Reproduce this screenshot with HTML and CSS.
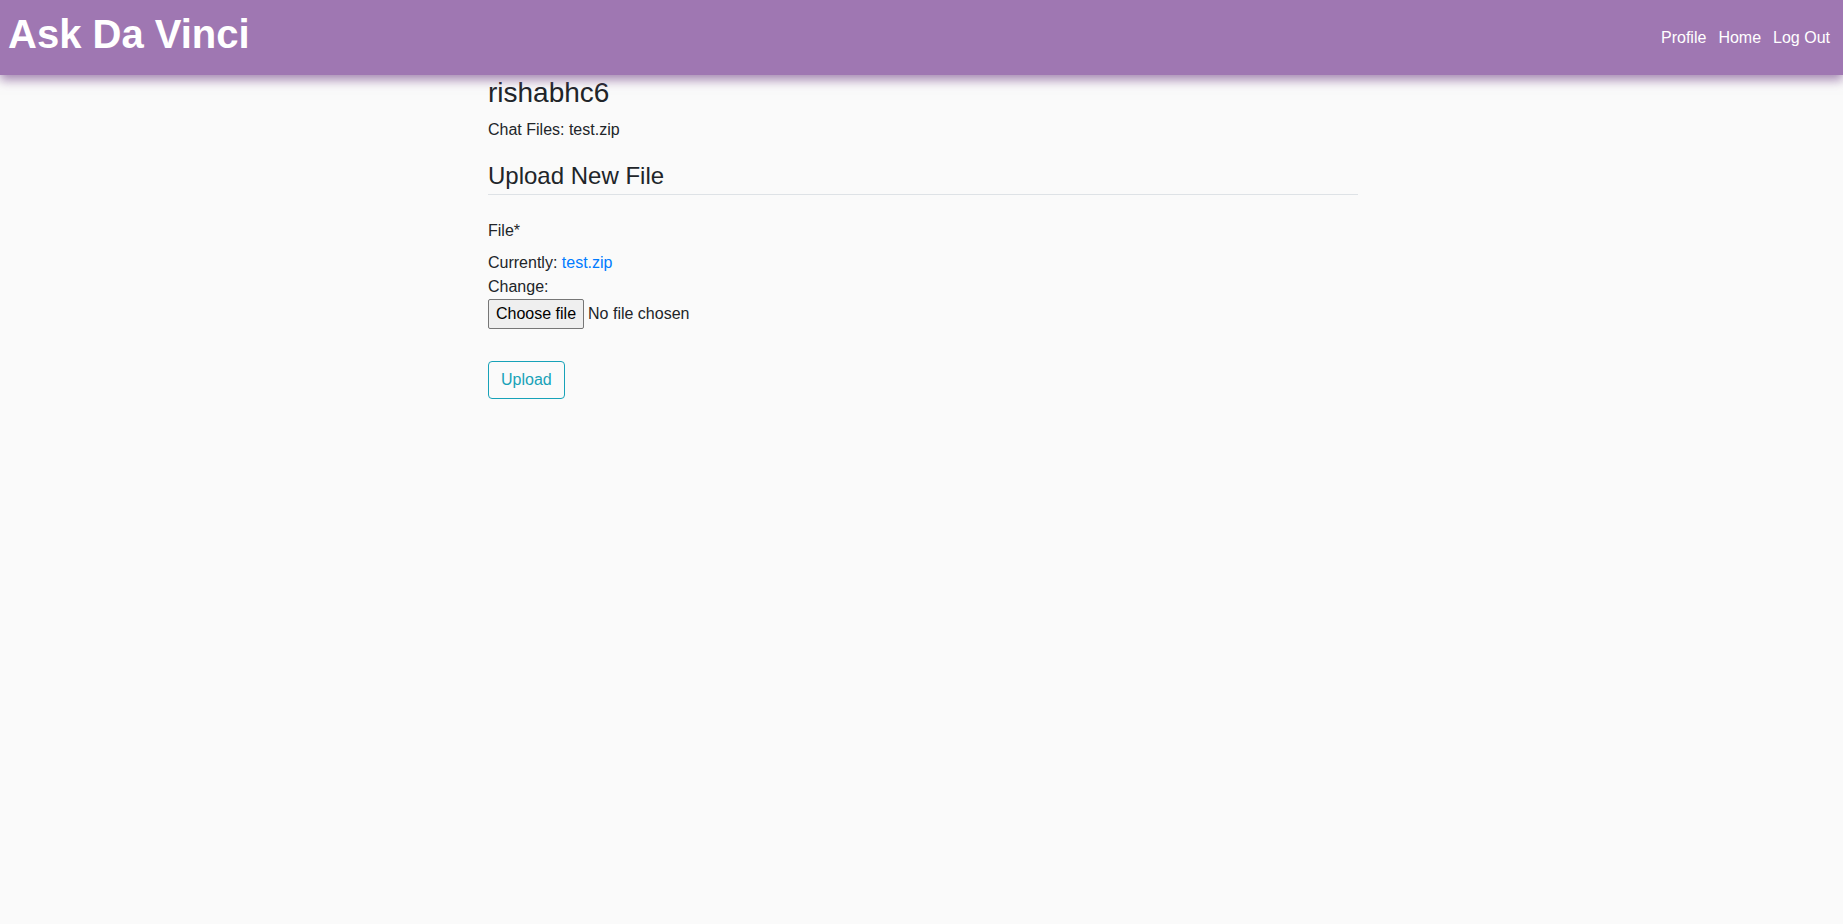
FILE: index.html
```html
<!DOCTYPE html>
<html lang="en">
<head>
<meta charset="utf-8">
<title>Ask Da Vinci</title>
<link rel="stylesheet" href="styles.css">
</head>
<body>
<header class="navbar">
  <h1 class="brand">Ask Da Vinci</h1>
  <nav class="nav">
    <a class="nav-link" href="#">Profile</a>
    <a class="nav-link" href="#">Home</a>
    <a class="nav-link" href="#">Log Out</a>
  </nav>
</header>
<div class="page">
  <main class="content">
    <h3 class="account-heading">rishabhc6</h3>
    <p class="chat-files">Chat Files: test.zip</p>
    <form class="upload-form">
      <fieldset class="form-group">
        <legend class="legend">Upload New File</legend>
        <div class="form-group">
          <label class="label">File*</label>
          <div class="file-field">
            <div>Currently: <a class="link" href="#">test.zip</a></div>
            <div>Change:</div>
            <div class="file-row">
              <label class="file-btn">Choose file<input type="file" class="file-native"></label>
              <span class="file-status">No file chosen</span>
            </div>
          </div>
        </div>
      </fieldset>
      <div class="form-group">
        <button class="btn-outline-info" type="button">Upload</button>
      </div>
    </form>
  </main>
</div>
</body>
</html>
```
FILE: styles.css
```css
html, body {
  margin: 0;
  padding: 0;
}
body {
  font-family: "Liberation Sans", Arial, sans-serif;
  font-size: 16px;
  line-height: 1.5;
  color: #212529;
  background: #fafafa;
}
.navbar {
  display: flex;
  align-items: center;
  justify-content: space-between;
  height: 75px;
  padding: 0 13px 0 8px;
  background: #9f77b2;
  box-shadow: 0 5px 10px rgba(120, 75, 140, 0.65);
  position: relative;
}
.brand {
  margin: 0 0 8px 0;
  font-size: 40px;
  line-height: 1.2;
  font-weight: 700;
  color: #ffffff;
}
.nav {
  display: flex;
  gap: 12px;
}
.nav-link {
  color: #ffffff;
  text-decoration: none;
  font-size: 16px;
}
.page {
  padding-left: 3px;
}
.content {
  max-width: 870px;
  margin: 0 auto;
}
.account-heading {
  margin: 1px 0 8px 0;
  font-size: 28px;
  line-height: 1.2;
  font-weight: 400;
}
.chat-files {
  margin: 0 0 16px 0;
}
.upload-form {
  margin: 0;
}
fieldset.form-group {
  border: 0;
  padding: 0;
  margin: 0 0 16px 0;
  min-width: 0;
}
.form-group {
  margin-bottom: 16px;
}
.legend {
  display: block;
  width: 100%;
  padding: 0;
  margin-bottom: 24px;
  font-size: 24px;
  line-height: 1.5;
  border-bottom: 1px solid #dee2e6;
}
.label {
  display: inline-block;
  margin-bottom: 8px;
}
.link {
  color: #007bff;
  text-decoration: none;
}
.file-row {
  display: flex;
  align-items: center;
}
.file-btn {
  display: inline-block;
  padding: 2px 7px 2px 7px;
  margin-right: 4px;
  background: #efefef;
  color: #000000;
  border: 1px solid #767676;
  border-radius: 2px;
  line-height: 24px;
  cursor: default;
}
.file-native {
  display: none;
}
.file-status {
  color: #212529;
}
.btn-outline-info {
  font-family: inherit;
  font-size: 16px;
  line-height: 1.5;
  padding: 6px 12px;
  color: #17a2b8;
  background: transparent;
  border: 1px solid #17a2b8;
  border-radius: 4px;
  cursor: pointer;
}
```
